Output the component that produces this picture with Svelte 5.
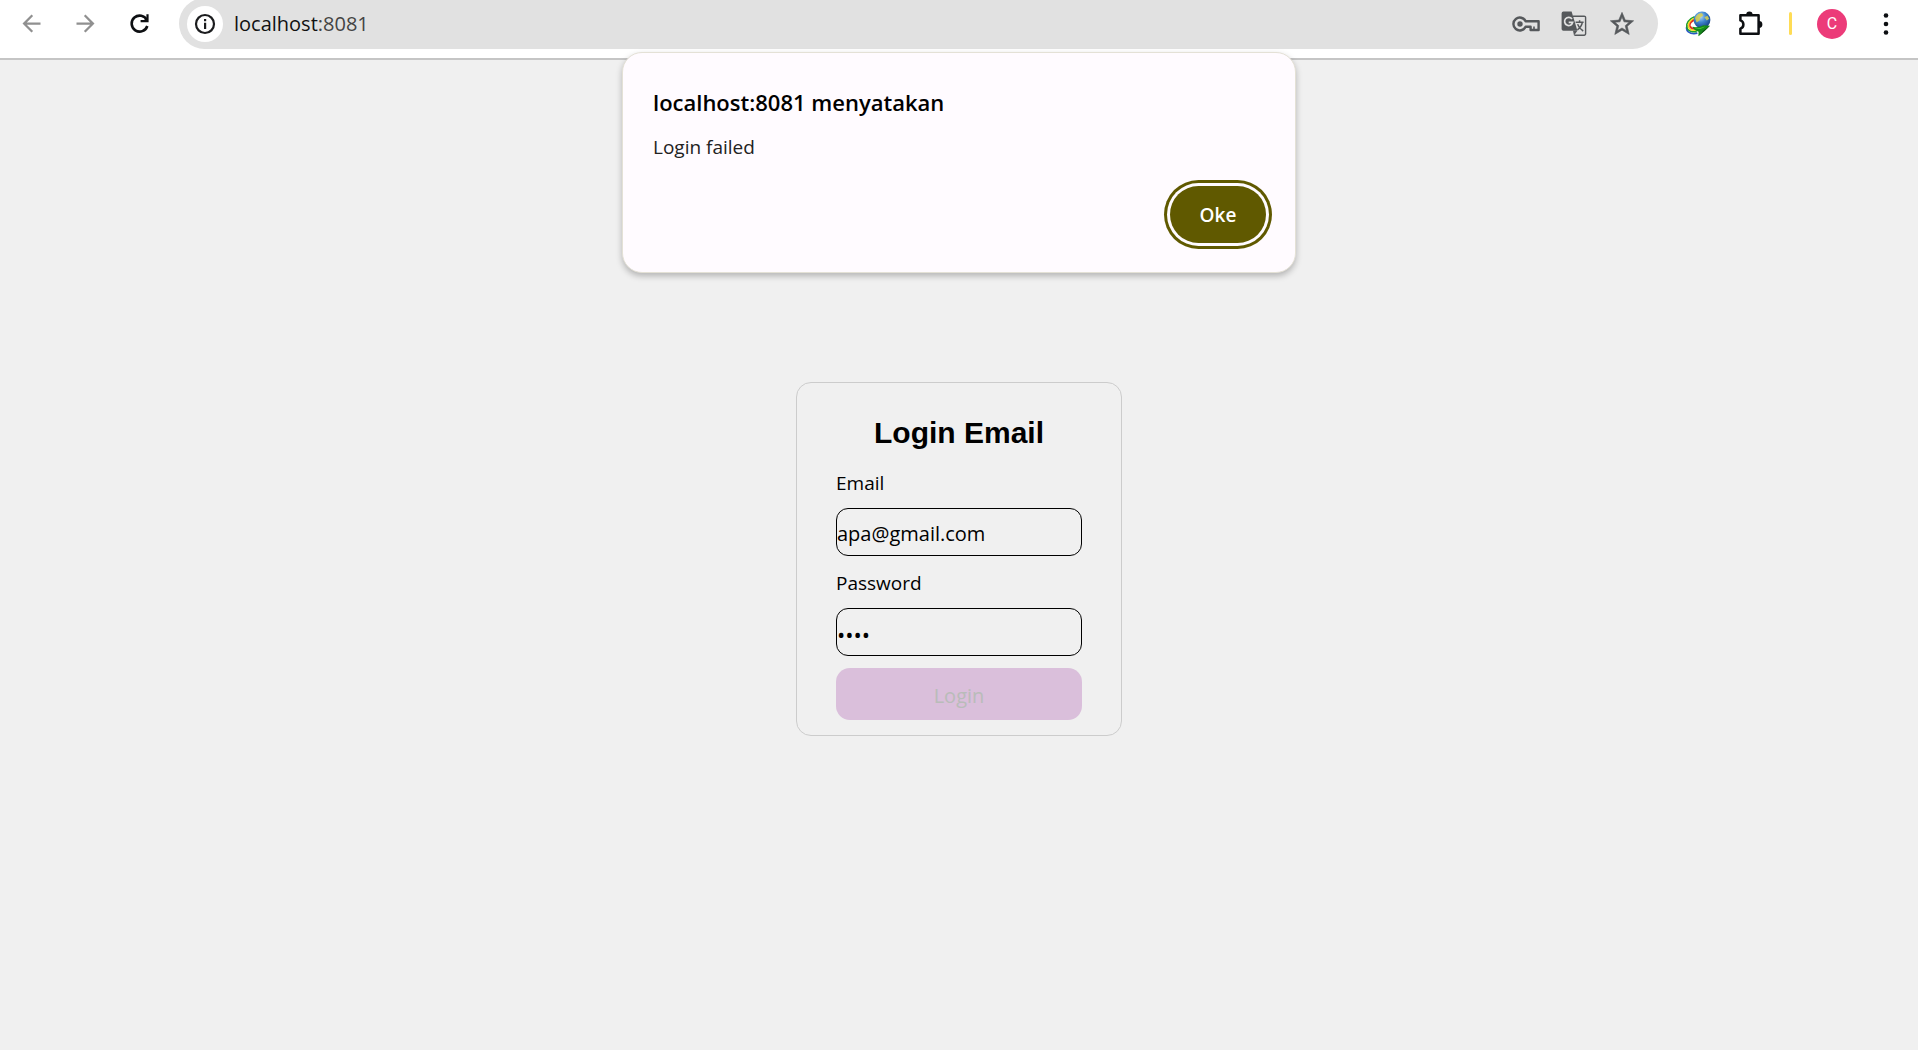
<script>
  let email = $state('apa@gmail.com');
  let password = $state('1234');
</script>

<div class="window">
  <header class="toolbar">
    <nav class="history" aria-label="Navigation">
      <button class="tool muted" aria-label="Back">
        <svg viewBox="0 0 24 24" width="27" height="27"><path d="M20 11H7.83l5.59-5.59L12 4l-8 8 8 8 1.41-1.41L7.83 13H20z" fill="currentColor" /></svg>
      </button>
      <button class="tool muted" aria-label="Forward">
        <svg viewBox="0 0 24 24" width="27" height="27"><path d="M12 4l-1.41 1.41L16.17 11H4v2h12.17l-5.58 5.59L12 20l8-8z" fill="currentColor" /></svg>
      </button>
      <button class="tool" aria-label="Reload">
        <svg viewBox="0 0 27 27" width="27" height="27">
          <path d="M20.9 10.2A8 8 0 1 0 21.3 16" fill="none" stroke="currentColor" stroke-width="2.6" />
          <path d="M20.4 4.2h2.2v8h-8V9.9h3.6l2.2-2.2z" fill="currentColor" />
        </svg>
      </button>
    </nav>

    <div class="address">
      <button class="site-info" aria-label="Site information">
        <svg viewBox="0 0 22 22" width="22" height="22">
          <circle cx="11" cy="11" r="9" fill="none" stroke="currentColor" stroke-width="2.2" />
          <path d="M10 9.8h2.2V16H10zM10 6h2.2v2.2H10z" fill="currentColor" />
        </svg>
      </button>
      <a class="url" href="http://localhost:8081">localhost<span>:8081</span></a>
      <div class="page-actions">
        <button class="tool" aria-label="Passwords">
          <svg viewBox="0 0 28 28" width="28" height="28">
            <path d="M13.6 11.3A6.4 6.4 0 1 0 13.6 16.7H18.6V20H26.6V11.3Z" fill="none" stroke="currentColor" stroke-width="2.4" stroke-linejoin="round" />
            <circle cx="8" cy="14" r="2.7" fill="currentColor" />
            <path d="M22 16.4v3.2" stroke="currentColor" stroke-width="1.6" />
          </svg>
        </button>
        <button class="tool" aria-label="Translate this page">
          <svg viewBox="0 0 26 26" width="26" height="26">
            <path d="M12 5.2h11.2a1.4 1.4 0 0 1 1.4 1.4v16.2a1.4 1.4 0 0 1-1.4 1.4H13.4" fill="none" stroke="currentColor" stroke-width="1.4" />
            <path d="M2.4.6h8.2L16.4 19.8H2.4A1.8 1.8 0 0 1 .6 18V2.400A1.8 1.8 0 0 1 2.400.6z" fill="currentColor" />
            <path d="M12 19.8h4.4L13 24.4z" fill="currentColor" />
            <path d="M11 8A4.1 4.1 0 1 0 11.7 11.4H7.7" fill="none" stroke="#e1e1e1" stroke-width="1.7" />
            <path d="M14.6 11.2h8M18.6 9.2v2M21.4 11.2c-.6 3.4-2.4 5.8-5 7.6M16.6 13.2c1 2.8 2.8 5 5.6 6.8" fill="none" stroke="currentColor" stroke-width="1.5" />
          </svg>
        </button>
        <button class="tool" aria-label="Bookmark this tab">
          <svg viewBox="0 0 24 24" width="28" height="28"><path d="M22 9.24l-7.19-.62L12 2 9.19 8.63 2 9.24l5.46 4.73L5.82 21 12 17.27 18.18 21l-1.63-7.03zM12 15.4l-3.76 2.27 1-4.28-3.32-2.88 4.38-.38L12 6.1l1.71 4.04 4.38.38-3.32 2.88 1 4.28z" fill="currentColor" stroke="currentColor" stroke-width=".5" /></svg>
        </button>
      </div>
    </div>

    <div class="extensions">
      <button class="tool" aria-label="Download manager">
        <svg viewBox="0 0 26 26" width="26" height="26">
          <defs>
            <radialGradient id="globe" cx=".4" cy=".3" r=".75">
              <stop offset="0" stop-color="#b9dcf5" />
              <stop offset=".45" stop-color="#3f86cf" />
              <stop offset="1" stop-color="#123a80" />
            </radialGradient>
          </defs>
          <path d="M11 8C7 9.500 5 13 6 16l6 1z" fill="#fff" />
          <g fill="none" stroke-width="1.7">
            <path d="M3 14c-2 2.600-1.600 5 .4 6.800 2.200 1.800 5.600 2.200 9 1.400" stroke="#2757c4" />
            <path d="M9.600 5.800C4 8 .8 12.600 1.800 16.400c.8 3 4.800 4.800 10 4.200" stroke="#1da02c" />
            <path d="M10 7C5.400 8.800 2.600 12.400 3.400 15.600c.6 2.600 4 4 8.400 3.400" stroke="#f7dc1e" />
            <path d="M10 8.600C6.600 10 4.400 12.800 5 15c.6 2 3.200 3 6.600 2.400" stroke="#e2321c" />
          </g>
          <circle cx="17" cy="9" r="8.400" fill="url(#globe)" />
          <path d="M10 7c1.400-3.400 4-5 7-4.800l1.200 2.400-2.800 1.800-.8 3.200-3 1.800zM19.400 6.200l3-1.400 1.800 3-2.400 1.600z" fill="#d8cf4e" opacity=".85" />
          <path d="M7.400 15.800c4 .8 8 .2 10.800-1.600l6.800.6-5.200 5-6.400 5.400.2-4.400c-2.800-.8-5-2.400-6.200-5z" fill="#168a1b" />
          <path d="M9 16.600c4 .8 8.200.2 11-1.400-2.400 2.800-7 4-11 1.400z" fill="#45c433" />
          <path d="M13.400 25.200l6.400-5.400 5.200-5-6.600 4.600z" fill="#0a4a10" />
        </svg>
      </button>
      <button class="tool" aria-label="Extensions">
        <svg viewBox="0 0 28 28" width="28" height="28">
          <path d="M4.400 5.200H22.600V23.800H4.400V18.600C8.400 17.400 8.400 11.600 4.400 10.400Z" fill="none" stroke="currentColor" stroke-width="2.500" stroke-linejoin="round" />
          <path d="M10.200 4.800a3.200 3.200 0 0 1 6.400 0zM23 11a3.400 3.400 0 0 1 0 6.800z" fill="currentColor" />
        </svg>
      </button>
      <span class="divider"></span>
      <button class="avatar" aria-label="Profile C">C</button>
      <button class="tool" aria-label="Menu">
        <svg viewBox="0 0 26 26" width="26" height="26" fill="currentColor"><circle cx="13" cy="4.500" r="2.300" /><circle cx="13" cy="13" r="2.300" /><circle cx="13" cy="21.500" r="2.300" /></svg>
      </button>
    </div>
  </header>

  <main>
    <form class="card">
      <h1>Login Email</h1>
      <label for="email">Email</label>
      <input id="email" type="email" bind:value={email} />
      <label for="password">Password</label>
      <input id="password" type="password" bind:value={password} />
      <button class="submit" type="button" disabled>Login</button>
    </form>
  </main>

  <div class="overlay">
    <div class="alert" role="alertdialog" aria-modal="true" aria-labelledby="alert-title" aria-describedby="alert-text">
      <h2 id="alert-title">localhost:8081 menyatakan</h2>
      <p id="alert-text">Login failed</p>
      <button class="confirm">Oke</button>
    </div>
  </div>
</div>

<style>
  :global(body) {
    margin: 0;
    background: #f0f0f0;
    font-family: 'Open Sans', 'Noto Sans', sans-serif;
    color: #000;
  }
  * {
    box-sizing: border-box;
  }
  button,
  input {
    font: inherit;
    color: inherit;
    border: 0;
    padding: 0;
    background: none;
  }
  svg {
    display: block;
  }
  .window {
    position: relative;
    display: flex;
    flex-direction: column;
    min-height: 100vh;
  }
  .toolbar {
    display: flex;
    height: 60px;
    padding: 0 19px 11px 18px;
    align-items: center;
    background: #fff;
    border-bottom: 2px solid #c5c5c5;
    overflow: hidden;
  }
  .history {
    display: flex;
    gap: 27px;
  }
  .tool {
    flex: none;
    color: #0d0f12;
  }
  .muted {
    color: #909090;
  }
  .address {
    flex: 1;
    display: flex;
    align-items: center;
    height: 51px;
    margin: 0 27px 0 26px;
    padding: 0 22px 0 8px;
    border-radius: 26px;
    background: #e1e1e1;
  }
  .site-info {
    display: grid;
    place-items: center;
    width: 36px;
    height: 36px;
    border-radius: 50%;
    background: #fff;
    color: #1b1c1e;
  }
  .url {
    flex: 1;
    margin-left: 11px;
    font-size: 20px;
    line-height: 26px;
    color: #111;
    text-decoration: none;
  }
  .url span {
    color: #444;
  }
  .page-actions {
    display: flex;
    align-items: center;
    gap: 21px;
  }
  .page-actions .tool {
    color: #55585b;
  }
  .extensions {
    display: flex;
    align-items: center;
    gap: 25px;
  }
  .divider {
    width: 3px;
    height: 23px;
    border-radius: 2px;
    background: #ffdc55;
  }
  .avatar {
    width: 30px;
    height: 30px;
    margin-right: 1px;
    border-radius: 50%;
    background: #ec3b79;
    color: #fff;
    font-family: Roboto, sans-serif;
    font-size: 16px;
    line-height: 30px;
    text-align: center;
  }
  main {
    flex: 1;
    display: grid;
    place-items: center;
    padding-top: 8px;
  }
  .card {
    display: flex;
    flex-direction: column;
    width: 326px;
    padding: 30px 39px 15px;
    border: 1px solid #ccc;
    border-radius: 15px;
  }
  h1 {
    margin: 0 0 16px;
    font-family: 'Liberation Sans', Arial, sans-serif;
    font-size: 30px;
    line-height: 40px;
    text-align: center;
  }
  label {
    margin-bottom: 11px;
    font-size: 19px;
    line-height: 28px;
  }
  .card input {
    width: 100%;
    height: 48px;
    margin-bottom: 13px;
    padding: 3px 0 0;
    border: 1px solid #000;
    border-radius: 12px;
    font-size: 20px;
  }
  .card input[type='password'] {
    margin-bottom: 12px;
    font-size: 22px;
  }
  .submit {
    height: 52px;
    padding-top: 2px;
    border-radius: 14px;
    background: #dabfdb;
    color: #b9bcb9;
    font-size: 20px;
  }
  .overlay {
    position: absolute;
    inset: 0;
    display: flex;
    justify-content: center;
    align-items: flex-start;
    padding: 52px 16px 0;
  }
  .alert {
    display: flex;
    flex-direction: column;
    width: 674px;
    padding: 31px 24px 29px 30px;
    border: 1px solid #e4e1d6;
    border-radius: 20px;
    background: #fffbff;
    box-shadow: 0 3px 6px rgba(0, 0, 0, 0.25);
  }
  h2 {
    margin: 0 0 13px;
    font-size: 22px;
    font-weight: 600;
    line-height: 36px;
  }
  p {
    margin: 0 0 25px;
    font-size: 19px;
    line-height: 28px;
    color: #222;
  }
  .confirm {
    align-self: flex-end;
    width: 96px;
    height: 57px;
    margin-right: 5px;
    border-radius: 29px;
    background: #605900;
    box-shadow: 0 0 0 3px #fffbff, 0 0 0 6px #605900;
    color: #fff;
    font-size: 19px;
    font-weight: 600;
  }
</style>
